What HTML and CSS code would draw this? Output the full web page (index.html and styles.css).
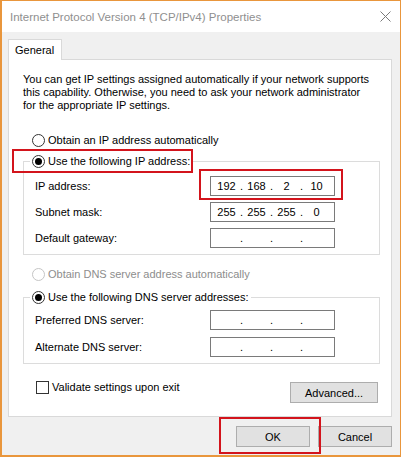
FILE: index.html
```html
<!DOCTYPE html>
<html lang="en">
  <head>
    <meta charset="UTF-8" />
    <title>Internet Protocol Version 4 (TCP/IPv4) Properties</title>
    <link rel="stylesheet" href="styles.css">
  </head>
  <body>
    <div class="window">
      <div class="titlebar">
        <span class="title">Internet Protocol Version 4 (TCP/IPv4) Properties</span>
        <svg class="close" width="11" height="11" viewBox="0 0 11 11">
          <path d="M0.5 0.5L10.5 10.5M10.5 0.5L0.5 10.5" stroke="#7a7a7a" stroke-width="1" fill="none" />
        </svg>
      </div>

      <div class="content">
        <div class="tabs"><div class="tab">General</div></div>

        <div class="panel">
          <p class="intro">You can get IP settings assigned automatically if your network supports<br>this capability. Otherwise, you need to ask your network administrator<br>for the appropriate IP settings.</p>

          <label class="radio first"><span class="circle"></span>Obtain an IP address automatically</label>

          <fieldset class="group ip-group">
            <legend><label class="radio"><span class="circle checked"></span>Use the following IP address:</label></legend>
            <div class="field">
              <span>IP address:</span>
              <div class="ipbox"><span>192</span><i>.</i><span>168</span><i>.</i><span>2</span><i>.</i><span>10</span></div>
            </div>
            <div class="field">
              <span>Subnet mask:</span>
              <div class="ipbox"><span>255</span><i>.</i><span>255</span><i>.</i><span>255</span><i>.</i><span>0</span></div>
            </div>
            <div class="field">
              <span>Default gateway:</span>
              <div class="ipbox"><span></span><i>.</i><span></span><i>.</i><span></span><i>.</i><span></span></div>
            </div>
          </fieldset>

          <label class="radio disabled dns-auto"><span class="circle"></span>Obtain DNS server address automatically</label>

          <fieldset class="group dns-group">
            <legend><label class="radio"><span class="circle checked"></span>Use the following DNS server addresses:</label></legend>
            <div class="field">
              <span>Preferred DNS server:</span>
              <div class="ipbox"><span></span><i>.</i><span></span><i>.</i><span></span><i>.</i><span></span></div>
            </div>
            <div class="field">
              <span>Alternate DNS server:</span>
              <div class="ipbox"><span></span><i>.</i><span></span><i>.</i><span></span><i>.</i><span></span></div>
            </div>
          </fieldset>

          <div class="options">
            <label class="check"><span class="box"></span>Validate settings upon exit</label>
            <button class="btn advanced">Advanced...</button>
          </div>
        </div>

        <div class="actions">
          <button class="btn">OK</button>
          <button class="btn">Cancel</button>
        </div>
      </div>

      <!-- red highlight marks -->
      <div class="mark mark-radio"></div>
      <div class="mark mark-ip"></div>
      <div class="mark mark-ok"></div>
    </div>
  </body>
</html>
```

FILE: styles.css
```css
body {
  margin: 0;
  font-family: "Liberation Sans", Arial, sans-serif;
  font-size: 11px;
  color: #000;
}

.window {
  position: relative;
  width: 401px;
  height: 457px;
  box-sizing: border-box;
  border-style: solid;
  border-color: #e9963c;
  border-width: 1px 1px 2px 2px;
  background: #f0f0f0;
  overflow: hidden;
}

.titlebar {
  height: 31px;
  background: #fff;
  display: flex;
  align-items: center;
  justify-content: space-between;
  padding: 0 9px 0 8px;
}

.title {
  color: #8f8f8f;
  font-size: 11.5px;
  white-space: nowrap;
}

.content {
  padding: 7px 8px 0 6px;
}

.tabs {
  display: flex;
}

.tab {
  position: relative;
  z-index: 1;
  width: 54px;
  height: 21px;
  box-sizing: border-box;
  padding-left: 6px;
  line-height: 20px;
  background: #fff;
  border: 1px solid #d9d9d9;
  border-bottom: none;
  margin-bottom: -1px;
}

.panel {
  height: 358px;
  box-sizing: border-box;
  background: #fff;
  border: 1px solid #d9d9d9;
  padding: 13px 11px 0 14px;
  white-space: nowrap;
}

.intro {
  margin: 0;
  line-height: 13px;
}

.radio {
  display: flex;
  align-items: center;
  height: 16px;
}

.radio.first {
  margin: 20px 0 0 9px;
}

.circle {
  width: 13px;
  height: 13px;
  box-sizing: border-box;
  border: 1px solid #333;
  border-radius: 50%;
  margin-right: 3px;
  display: flex;
  align-items: center;
  justify-content: center;
}

.circle.checked::after {
  content: "";
  width: 7px;
  height: 7px;
  border-radius: 50%;
  background: #000;
}

.radio.disabled {
  color: #8d8d8d;
}

.radio.disabled .circle {
  border-color: #c5c5c5;
}

.dns-auto {
  margin: 11px 0 0 9px;
}

.group {
  margin: 0;
  border: 1px solid #dcdcdc;
  padding: 7px 0 6px 6px;
  min-width: 0;
}

.ip-group {
  margin-top: 5px;
}

.dns-group {
  margin-top: 7px;
  padding-top: 5px;
}

.group legend {
  padding: 0 2px;
}

.field {
  display: grid;
  grid-template-columns: 175px 125px;
  align-items: center;
  padding-left: 5px;
  height: 20px;
}

.ip-group .field + .field {
  margin-top: 6px;
}

.dns-group .field + .field {
  margin-top: 7px;
}

.ipbox {
  height: 20px;
  box-sizing: border-box;
  border: 1px solid #7a7a7a;
  background: #fff;
  display: flex;
  align-items: center;
  padding-left: 3px;
}

.ipbox span {
  width: 25px;
  text-align: center;
}

.ipbox i {
  font-style: normal;
  width: 5px;
  text-align: center;
}

.options {
  display: flex;
  justify-content: space-between;
  align-items: flex-start;
  margin-top: 15px;
}

.check {
  display: flex;
  align-items: center;
  height: 16px;
  margin-left: 13px;
}

.box {
  width: 13px;
  height: 13px;
  box-sizing: border-box;
  border: 1px solid #333;
  background: #fff;
  margin-right: 3px;
}

.btn {
  font-family: inherit;
  font-size: 11px;
  color: #000;
  background: #e1e1e1;
  border: 1px solid #adadad;
  height: 21px;
  width: 74px;
  padding: 0;
}

.btn.advanced {
  width: 88px;
  margin: 3px 2px 0 0;
}

.actions {
  display: flex;
  justify-content: flex-end;
  gap: 8px;
  margin-top: 9px;
}

.mark {
  position: absolute;
  border: 2px solid #d3141c;
  box-sizing: border-box;
}

.mark-radio {
  left: 10px;
  top: 148px;
  width: 181px;
  height: 24px;
}

.mark-ip {
  left: 197px;
  top: 168px;
  width: 144px;
  height: 31px;
}

.mark-ok {
  left: 217px;
  top: 416px;
  width: 102px;
  height: 37px;
}
```
